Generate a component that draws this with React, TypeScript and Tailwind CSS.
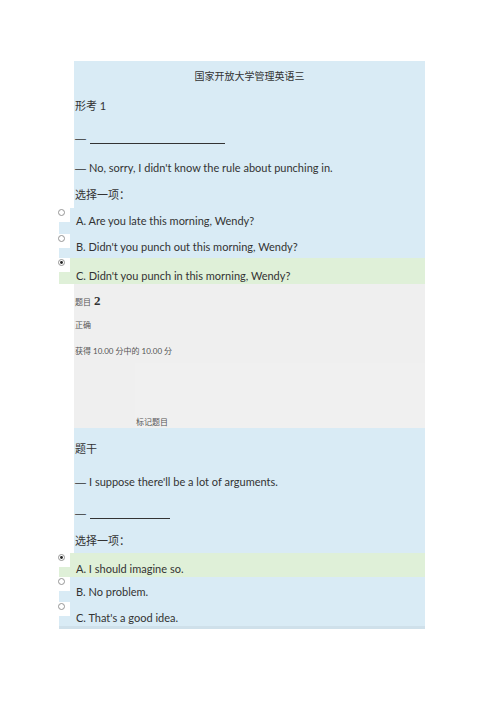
import React from "react";

const F = { fontFamily: '"Lato", "Noto Sans CJK SC", sans-serif' };
const D = { fontFamily: '"Liberation Sans", sans-serif' };

function Dash() {
  return <span style={D}>—</span>;
}

function Radio({ checked }: { checked?: boolean }) {
  return (
    <div className="absolute left-[-2px] top-0 w-[13px] h-[14px] bg-white">
      <svg width="13" height="14" viewBox="0 0 13 14">
        <circle cx="4.5" cy="4.5" r="3" fill="#fff" stroke="#8a8a8a" strokeWidth="0.9" />
        {checked && <circle cx="4.5" cy="4.5" r="1.4" fill="#222" />}
      </svg>
    </div>
  );
}

function Option({ text, checked, h, pt }: { text: string; checked?: boolean; h: string; pt: string }) {
  return (
    <div className={`relative ${h} ${checked ? "bg-[#dff0d8]" : "bg-[#d9ebf5]"}`}>
      <Radio checked={checked} />
      <div className={`pl-[17px] ${pt} text-[11px] leading-[14px] text-[#333]`}>{text}</div>
    </div>
  );
}

export default function App() {
  return (
    <div className="w-[500px] h-[707px] bg-white pt-[61px]" style={F}>
      <div className="ml-[59px] w-[366px]">
        <div className="ml-[15px] bg-[#d9ebf5] text-[#333]">
          <div className="h-[29px] flex items-center justify-center text-[10px] pt-[1px]">国家开放大学管理英语三</div>
          <div className="h-[32px] flex items-center text-[11px] pl-[1px]">形考 1</div>
          <div className="h-[33px] flex items-center text-[11px] pl-[1px]">
            <Dash />
            <span className="inline-block ml-[4px] w-[135px] h-[10px] border-b border-[#333]"></span>
          </div>
          <div className="h-[27px] flex items-center text-[11px] pl-[1px]">
            <Dash />
            <span className="ml-[3px]">No, sorry, I didn't know the rule about punching in.</span>
          </div>
          <div className="h-[26px] flex items-center text-[11px] pl-[1px]">选择一项：</div>
        </div>
        <Option text="A. Are you late this morning, Wendy?" h="h-[26px]" pt="pt-[6px]" />
        <Option text="B. Didn't you punch out this morning, Wendy?" h="h-[24px]" pt="pt-[6px]" />
        <Option text="C. Didn't you punch in this morning, Wendy?" checked h="h-[26px]" pt="pt-[11px]" />
        <div className="ml-[15px] bg-[#efefef] h-[144px] relative text-[#555]">
          <div className="absolute left-[1px] top-[7px] flex items-baseline">
            <span className="text-[8px]">题目</span>
            <span className="ml-[3px] text-[13px] font-bold text-[#333]" style={{ fontFamily: '"Liberation Serif", serif' }}>2</span>
          </div>
          <div className="absolute left-[1px] top-[35px] text-[8px]">正确</div>
          <div className="absolute left-[1px] top-[61px] text-[8px]">获得 10.00 分中的 10.00 分</div>
          <div className="absolute left-[61px] top-[79px] bottom-0 right-0 bg-[#f0f0f0]"></div>
          <div className="absolute left-[62px] top-[132px] text-[8px]">标记题目</div>
        </div>
        <div className="ml-[15px] bg-[#d9ebf5] text-[#333]">
          <div className="h-[37px] flex items-center text-[11px] pl-[1px] pt-[6px]">题干</div>
          <div className="h-[32px] flex items-center text-[11px] pl-[1px] pt-[2px]">
            <Dash />
            <span className="ml-[3px]">I suppose there'll be a lot of arguments.</span>
          </div>
          <div className="h-[33px] flex items-center text-[11px] pl-[1px]">
            <Dash />
            <span className="inline-block ml-[4px] w-[80px] h-[10px] border-b border-[#333]"></span>
          </div>
          <div className="h-[23px] flex items-center text-[11px] pl-[1px]">选择一项：</div>
        </div>
        <Option text="A. I should imagine so." checked h="h-[24px]" pt="pt-[9px]" />
        <Option text="B. No problem." h="h-[25px]" pt="pt-[8px]" />
        <Option text="C. That's a good idea." h="h-[24px]" pt="pt-[9px]" />
        <div className="h-[3px] bg-[#cfe0ea]"></div>
      </div>
    </div>
  );
}
